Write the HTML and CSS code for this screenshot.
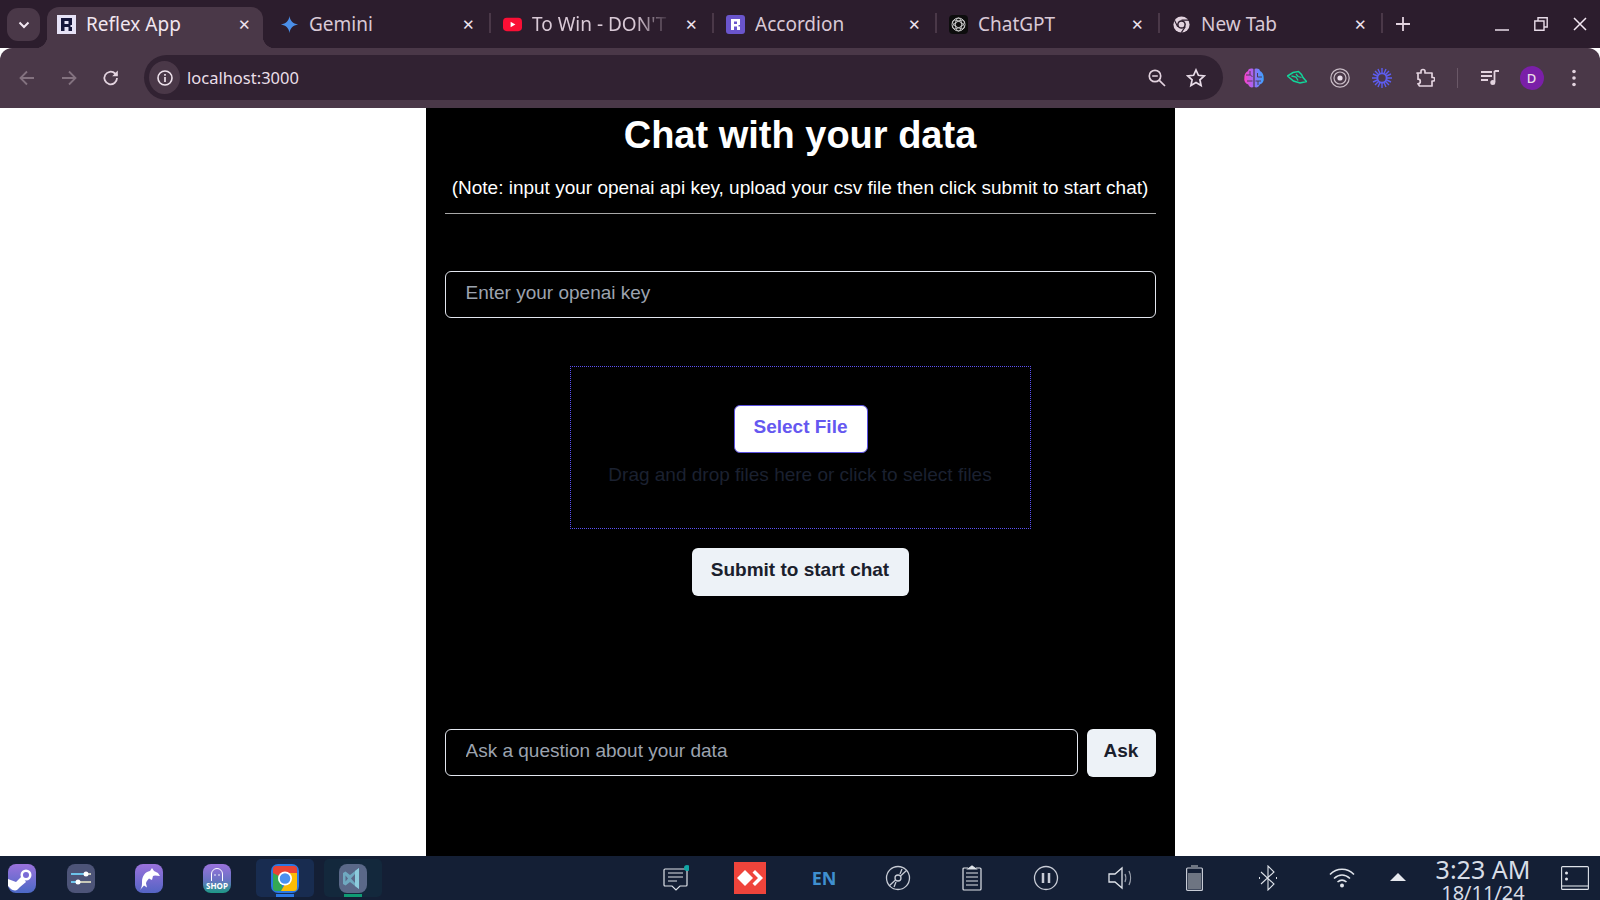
FILE: index.html
```html
<!DOCTYPE html>
<html lang="en">
<head>
<meta charset="utf-8">
<title>Reflex App</title>
<link rel="stylesheet" href="styles.css">
</head>
<body>
<div class="window">
  <header class="tabstrip">
    <button class="tab-search"><svg width="12" height="8" viewBox="0 0 12 8"><path d="M1.500 1.500 6 6l4.500-4.500" fill="none" stroke="#f3e8f3" stroke-width="2"/></svg></button>
    <div class="tab active">
      <svg class="fav" viewBox="0 0 19 19"><rect width="19" height="19" fill="#e6e2f6"/><path fill-rule="evenodd" d="M4 3h11v7h-1.500v2H15v4h-3.500v-4h-4v4H4zm3.500 3v3h4V6z" fill="#15163a"/></svg>
      <span class="tab-title">Reflex App</span><span class="tab-x">✕</span>
    </div>
    <div class="tab">
      <svg class="fav" viewBox="0 0 20 20"><path d="M10 1c.7 5 3.500 8 9 9-5.500 1-8.300 4-9 9-.7-5-3.500-8-9-9 5.500-1 8.300-4 9-9z" fill="#4b8fe8"/></svg>
      <span class="tab-title">Gemini</span><span class="tab-x">✕</span>
    </div>
    <div class="tab sep">
      <svg class="fav" viewBox="0 0 20 20"><rect y="3" width="20" height="14" rx="4" fill="#fa0f35"/><path d="M8 7.200 13 10l-5 2.800z" fill="#fff"/></svg>
      <span class="tab-title fade">To Win - DON'T Look Back</span><span class="tab-x">✕</span>
    </div>
    <div class="tab sep">
      <svg class="fav" viewBox="0 0 19 19"><rect width="19" height="19" rx="3" fill="#6a55cc"/><path fill-rule="evenodd" d="M5 4h9v6h-1.500v1.500H14V15h-3v-3.500H8V15H5zm3 2.500V9h3V6.500z" fill="#fff"/></svg>
      <span class="tab-title">Accordion</span><span class="tab-x">✕</span>
    </div>
    <div class="tab sep">
      <svg class="fav" viewBox="0 0 19 19"><rect width="19" height="19" rx="4" fill="#0d0d0d"/><g fill="none" stroke="#c9c9c9" stroke-width="1"><circle cx="9.500" cy="9.500" r="6.500"/><ellipse cx="9.500" cy="9.500" rx="6.500" ry="3" transform="rotate(30 9.500 9.500)"/><ellipse cx="9.500" cy="9.500" rx="6.500" ry="3" transform="rotate(-30 9.500 9.500)"/><ellipse cx="9.500" cy="9.500" rx="3" ry="6.500"/></g></svg>
      <span class="tab-title">ChatGPT</span><span class="tab-x">✕</span>
    </div>
    <div class="tab sep">
      <svg class="fav" viewBox="0 0 20 20"><circle cx="10" cy="10" r="8.500" fill="#e3d3df"/><circle cx="10" cy="10" r="4.600" fill="#2c1d2d"/><circle cx="10" cy="10" r="3" fill="#e3d3df"/><path d="M10 5.400h8M6 12.300 2.600 5.500M14 12.300l-4.200 6.300" stroke="#2c1d2d" stroke-width="1.200"/></svg>
      <span class="tab-title">New Tab</span><span class="tab-x">✕</span>
    </div>
    <span class="tab-divider"></span>
    <svg class="new-tab" width="14" height="14" viewBox="0 0 14 14"><path d="M7 0v14M0 7h14" stroke="#e3d3df" stroke-width="1.800"/></svg>
    <div class="win-controls">
      <svg width="14" height="14" viewBox="0 0 14 14"><path d="M0 13h14" stroke="#e8dce8" stroke-width="1.500"/></svg>
      <svg width="14" height="14" viewBox="0 0 14 14"><path d="M4 3.500V.8h9.200V10H10.500M.8 4h9.200v9.200H.8z" fill="none" stroke="#e8dce8" stroke-width="1.400"/></svg>
      <svg width="14" height="14" viewBox="0 0 14 14"><path d="m1 1 12 12M13 1 1 13" stroke="#f3e8f3" stroke-width="1.500"/></svg>
    </div>
  </header>

  <nav class="toolbar">
    <div class="nav-group">
      <svg class="tb" viewBox="0 0 20 20"><path d="M17 10H4m6-6.500L3.500 10l6.500 6.500" fill="none" stroke="#83727f" stroke-width="1.800"/></svg>
      <svg class="tb" viewBox="0 0 20 20"><path d="M3 10h13M10 3.500l6.500 6.500-6.500 6.500" fill="none" stroke="#83727f" stroke-width="1.800"/></svg>
      <svg class="tb" viewBox="0 0 20 20"><path d="M16 10a6.300 6.300 0 1 1-1.900-4.500L16 7.300" fill="none" stroke="#e3d3df" stroke-width="1.800"/><path d="M16.800 2.600v5.600h-5.600z" fill="#e3d3df"/></svg>
    </div>
    <div class="omnibox">
      <span class="site-info"><svg width="18" height="18" viewBox="0 0 18 18"><circle cx="9" cy="9" r="7" fill="none" stroke="#eee2ec" stroke-width="1.600"/><path d="M9 8v5M9 5v1.700" stroke="#eee2ec" stroke-width="1.700"/></svg></span>
      <span class="url">localhost:3000</span>
      <svg class="omni-icon" viewBox="0 0 20 20"><circle cx="8" cy="8" r="5.700" fill="none" stroke="#e3d3df" stroke-width="1.700"/><path d="M5.200 8h5.600M12.300 12.300l5.700 5.700" stroke="#e3d3df" stroke-width="1.700"/></svg>
      <svg class="omni-icon" viewBox="0 0 20 20"><path d="m10 2 2.400 5.300 5.800.6-4.300 3.900 1.200 5.700L10 14.600l-5.100 2.900 1.200-5.700L1.800 7.900l5.800-.6z" fill="none" stroke="#e8dce8" stroke-width="1.700"/></svg>
    </div>
    <div class="ext-group">
      <svg class="tb" viewBox="0 0 20 20"><defs><linearGradient id="brain"><stop offset="0" stop-color="#ff3fc8"/><stop offset=".5" stop-color="#9a6bf8"/><stop offset="1" stop-color="#38a4ff"/></linearGradient></defs><path d="M9.400 1C7 0 4.500 .5 4 3 1.500 4 0 7.500.4 10c-.7 3 1 6 3.800 6.500 1 3 3.800 3.500 5.200 2.500zM10.600 1C13 0 15.500 .5 16 3c2.500 1 4 4.500 3.600 7 .7 3-1 6-3.800 6.500-1 3-3.800 3.500-5.200 2.500z" fill="url(#brain)"/><path d="M2 7h4.500l2 2M3 13h5.500M13.500 5v4h4.500M11.500 13h5.500M6 3v4M14 13v4" fill="none" stroke="#4a3848" stroke-width=".9"/></svg>
      <svg class="tb" viewBox="0 0 20 20"><path d="M.5 8 6 4.500l5.500-1 3 3L16 9.500l3.500 4-6.500 1.500-6.500-2z" fill="none" stroke="#11d69a" stroke-width="1.500"/><path d="M4.500 8l4.500 1 2 3.500M9 6l2 2.500 3.500 1" fill="none" stroke="#11d69a" stroke-width="1.300"/></svg>
      <svg class="tb" viewBox="0 0 20 20" fill="none" stroke="#c9bcc6"><circle cx="10" cy="10" r="9.200" stroke-width="1.200"/><circle cx="10" cy="10" r="6" stroke-width="1.200"/><circle cx="10" cy="10" r="2.600" fill="#e8dce8" stroke="none"/></svg>
      <svg class="tb" viewBox="0 0 20 20"><g stroke="#5d5df0" stroke-width="1.400"><path d="M10 0v5.500M10 14.500V20M0 10h5.500M14.500 10H20M3 3l4 4M13 13l4 4M17 3l-4 4M7 13l-4 4M6 1l2 4.500M12 14.500l2 4.500M14 1l-2 4.500M8 14.500 6 19M1 6l4.500 2M14.500 12l4.500 2M19 6l-4.500 2M5.500 12 1 14"/></g><circle cx="10" cy="10" r="4.600" fill="none" stroke="#5d5df0" stroke-width="1.800"/></svg>
      <svg class="tb" viewBox="0 0 20 20"><path d="M2 5h4V3.500a2 2 0 0 1 4 0V5h7v4.500h1a1.700 1.700 0 0 1 0 3.500h-1v5H4.500L3 15.800a2 2 0 0 0 0-4.600V5z" fill="none" stroke="#e3d3df" stroke-width="1.700" stroke-linejoin="round"/></svg>
      <span class="tb-sep"></span>
      <svg class="tb" viewBox="0 0 20 20"><path d="M1 4h11M1 8h11M1 12h7" stroke="#e3d3df" stroke-width="1.800"/><path d="M14.500 3v11" stroke="#e3d3df" stroke-width="1.800"/><path d="M14.500 3H19" stroke="#e3d3df" stroke-width="2"/><circle cx="12.800" cy="14.500" r="2.500" fill="#e3d3df"/></svg>
      <span class="avatar">D</span>
      <svg class="tb" viewBox="0 0 20 20"><g fill="#e3d3df"><circle cx="10" cy="3.500" r="1.800"/><circle cx="10" cy="10" r="1.800"/><circle cx="10" cy="16.500" r="1.800"/></g></svg>
    </div>
  </nav>

  <main class="page">
    <section class="panel">
      <h1 class="title">Chat with your data</h1>
      <p class="note">(Note: input your openai api key, upload your csv file then click submit to start chat)</p>
      <hr class="divider">
      <input class="field key-field" type="text" placeholder="Enter your openai key">
      <div class="dropzone">
        <button class="select-btn">Select File</button>
        <p class="drop-text">Drag and drop files here or click to select files</p>
      </div>
      <button class="grey-btn submit-btn">Submit to start chat</button>
      <div class="ask-row">
        <input class="field ask-field" type="text" placeholder="Ask a question about your data">
        <button class="grey-btn ask-btn">Ask</button>
      </div>
    </section>
  </main>

  <footer class="taskbar">
    <div class="apps">
      <span class="app"><svg class="app-icon" viewBox="0 0 28 29"><defs><linearGradient id="g1" x1="0" y1="0" x2="0" y2="1"><stop offset="0" stop-color="#9a72dc"/><stop offset="1" stop-color="#4b69c6"/></linearGradient></defs><rect width="28" height="29" rx="8" fill="url(#g1)"/><circle cx="18" cy="11" r="5.500" fill="#fff"/><circle cx="18" cy="11" r="3" fill="#7a6bd6"/><path d="M0 15l8 3 6-6 4 6-6 5-3 3c-2 1-5 0-6-1l-3-3z" fill="#fff"/></svg></span>
      <span class="app tight"><svg class="app-icon" viewBox="0 0 28 29"><rect width="28" height="29" rx="8" fill="#4d5478"/><path d="M4 10h15" stroke="#6cc3ea" stroke-width="2"/><path d="M19 10h5M11 18h13" stroke="#c8c8b8" stroke-width="2"/><path d="M4 18h7" stroke="#6cc3ea" stroke-width="2"/><circle cx="19" cy="10" r="2.500" fill="#fff"/><circle cx="11" cy="18" r="2.500" fill="#fff"/></svg></span>
      <span class="app"><svg class="app-icon" viewBox="0 0 28 29"><defs><linearGradient id="g2" x1="0" y1="0" x2="0" y2="1"><stop offset="0" stop-color="#9a72dc"/><stop offset="1" stop-color="#5464c4"/></linearGradient></defs><rect width="28" height="29" rx="8" fill="url(#g2)"/><path d="M5 26c2-3 2-5 2-8 0-6 3-10 8-11l2-3 2 3 4 2 2 3-5-.5-2 .5-1 4-3-1.500c-1 1-3 3-3 5l1 4-3-2z" fill="#fff"/></svg></span>
      <span class="app"><svg class="app-icon" viewBox="0 0 28 29"><defs><linearGradient id="g3" x1="0" y1="0" x2="0" y2="1"><stop offset="0" stop-color="#9a72dc"/><stop offset=".55" stop-color="#6a72c4"/><stop offset="1" stop-color="#1d9a86"/></linearGradient></defs><rect width="28" height="29" rx="8" fill="url(#g3)"/><path d="M8.500 17V10a5.500 5.500 0 0 1 11 0v7" fill="none" stroke="#fff" stroke-width="1"/><circle cx="12" cy="11" r=".8" fill="#fff"/><circle cx="16" cy="11" r=".8" fill="#fff"/><text x="14" y="25" class="shop">SHOP</text></svg></span>
      <span class="app running chrome-app"><svg class="app-icon chrome" viewBox="0 0 28 29"><rect width="28" height="29" rx="7" fill="#2b78e4"/><path d="M2 8h10L8 14l5 13H5a3 3 0 0 1-3-3z" fill="#34a853"/><path d="M14 8h12v16a3 3 0 0 1-3 3H10l4-7z" fill="#fbbc04"/><path d="M2 9V5a3 3 0 0 1 3-3h18a3 3 0 0 1 3 3v4H14a6.500 6.500 0 0 0-6 3z" fill="#ea4335"/><circle cx="14" cy="14.500" r="7" fill="#fff"/><circle cx="14" cy="14.500" r="5.300" fill="#4a90f0"/></svg><i class="run-bar blue"></i></span>
      <span class="app running vs-app"><svg class="app-icon" viewBox="0 0 28 29"><rect width="28" height="29" rx="8" fill="#5a6888"/><path d="M20 4v21l-9-7-4.500 3.500L4 20v-11l2.500-1.500L11 11z" fill="#6fa9c0"/><path d="M16 7v15l4 3V4z" fill="#8ccbdc"/><path d="M16 10v9l-4-4.500z" fill="#5a6888"/><path d="M6.500 11.500v6l2.500-3z" fill="#5a6888"/></svg><i class="run-bar green"></i></span>
    </div>
    <div class="tray">
      <span class="tray-item"><svg width="26" height="27" viewBox="0 0 26 27"><path d="M2 4h21a1 1 0 0 1 1 1v15a1 1 0 0 1-1 1h-6l-4 4-4-4H2a1 1 0 0 1-1-1V5a1 1 0 0 1 1-1z" fill="none" stroke="#dfe3ea" stroke-width="1.200"/><path d="M5 8h15M5 12h15M5 16h9" stroke="#dfe3ea" stroke-width="1.200"/><circle cx="24" cy="3" r="3" fill="#12a5a5"/></svg></span>
      <span class="tray-item"><svg width="32" height="32" viewBox="0 0 32 32"><rect width="32" height="32" fill="#ef443b"/><path d="m11 8 8 8-8 8-8-8zM21 8l8 8-8 8-2.500-2.500L24 16l-5.500-5.500z" fill="#fff"/></svg></span>
      <span class="tray-item en">EN</span>
      <span class="tray-item"><svg width="26" height="26" viewBox="0 0 26 26" fill="none" stroke="#c8ccd6" stroke-width="1.300"><circle cx="13" cy="13" r="11.500"/><circle cx="13" cy="13" r="3"/><path d="M15.500 11 22 5M4 21l6.500-6M17 4l-2 5M11 17l-2 5"/></svg></span>
      <span class="tray-item"><svg width="20" height="26" viewBox="0 0 20 26" fill="none" stroke="#dfe3ea" stroke-width="1.200"><path d="M6 3H2a1 1 0 0 0-1 1v20a1 1 0 0 0 1 1h16a1 1 0 0 0 1-1V4a1 1 0 0 0-1-1h-4"/><path d="M6 4l4-3 4 3z" fill="#dfe3ea"/><path d="M4 8h12M4 12h12M4 16h12M4 20h12"/></svg></span>
      <span class="tray-item"><svg width="26" height="26" viewBox="0 0 26 26"><circle cx="13" cy="13" r="11.500" fill="none" stroke="#c8ccd6" stroke-width="1.300"/><path d="M10 8v10M16 8v10" stroke="#c8ccd6" stroke-width="2.500"/></svg></span>
      <span class="tray-item speaker"><svg width="28" height="26" viewBox="0 0 28 26" fill="none" stroke="#dfe3ea" stroke-width="1.300"><path d="M1 9h6l7-6v20l-7-6H1z"/><path d="M17 9c1 2 1 6 0 8M21 6c2 4 2 10 0 14" stroke="#9aa0ac"/></svg></span>
      <span class="tray-item"><svg width="17" height="26" viewBox="0 0 17 26"><rect x=".6" y="3" width="15.800" height="22.400" rx="1" fill="none" stroke="#c8ccd6" stroke-width="1.200"/><rect x="2" y="8" width="13" height="16" fill="#6e7582"/><rect x="5" y="0" width="7" height="3" fill="#6e7582"/></svg></span>
      <span class="tray-item"><svg width="20" height="26" viewBox="0 0 20 26" fill="none" stroke="#dfe3ea" stroke-width="1.100"><path d="M3 7l13 12-6 6V1l6 6L3 19"/><path d="M1 13h1M18 13h1" stroke-width="2"/></svg></span>
      <span class="tray-item"><svg width="26" height="20" viewBox="0 0 26 20" fill="none" stroke="#dfe3ea" stroke-width="1.600"><path d="M1 6.500c7-7 17-7 24 0M5 10.500c5-4.500 11-4.500 16 0M8.500 14c3-2.500 6-2.500 9 0"/><circle cx="13" cy="17.500" r="2" fill="#dfe3ea" stroke="none"/></svg></span>
    </div>
    <svg class="tray-up" width="16" height="8" viewBox="0 0 16 8"><path d="M8 0l8 8H0z" fill="#e6e8ee"/></svg>
    <div class="clock"><span class="time">3:23 AM</span><span class="date">18/11/24</span></div>
    <svg class="show-desk" width="28" height="24" viewBox="0 0 28 24" fill="none" stroke="#dfe3ea" stroke-width="1.100"><rect x=".6" y=".6" width="26.800" height="22.800" rx="1"/><path d="M1 20h26"/><circle cx="5.500" cy="7" r="1.500" fill="#dfe3ea" stroke="none"/><circle cx="5.500" cy="13" r="1.500" fill="#dfe3ea" stroke="none"/></svg>
  </footer>
</div>
</body>
</html>
```
FILE: styles.css
```css
* { box-sizing: border-box; }
html, body { margin: 0; height: 100%; overflow: hidden; }
body { background: #fff; font-family: "Liberation Sans", Arial, sans-serif; }
button { font-family: inherit; cursor: pointer; }

.window { display: flex; flex-direction: column; height: 900px; }

/* Tab strip */
.tabstrip {
  height: 48px; flex: none; display: flex; align-items: flex-start;
  background: #2c1d2d; padding: 7px 0 0 7px;
  font-family: "Noto Sans", sans-serif;
}
.tab-search {
  width: 33px; height: 33px; margin: 1px 7px 0 0; flex: none; border: 0; border-radius: 11px;
  background: #4a3848; display: flex; align-items: center; justify-content: center; padding: 0;
}
.tab {
  position: relative; width: 223px; height: 41px; flex: none; display: flex; align-items: center;
  padding: 0 17px 7px 10px; color: #d9c9d6; font-size: 19px;
}
.tab.active { width: 216px; margin-right: 7px; padding-right: 11px; background: #4a3848; color: #f1e6ef; border-radius: 12px 12px 0 0; }
.tab.active::before, .tab.active::after {
  content: ""; position: absolute; bottom: 0; width: 12px; height: 12px;
}
.tab.active::before { left: -12px; background: radial-gradient(circle at 0 0, transparent 12px, #4a3848 12.500px); }
.tab.active::after { right: -12px; background: radial-gradient(circle at 100% 0, transparent 12px, #4a3848 12.500px); }
.tab.sep::before, .tab-divider {
  content: ""; width: 2px; height: 20px; background: #4a3848;
}
.tab.sep::before { position: absolute; left: -4px; top: 6px; }
.tab-divider { flex: none; margin: 6px 0 0 -4px; }
.fav { width: 19px; height: 19px; flex: none; margin-right: 10px; }
.tab-title { flex: 1; min-width: 0; white-space: nowrap; overflow: hidden; }
.tab-title.fade {
  -webkit-mask-image: linear-gradient(90deg, #000 75%, transparent 100%);
  mask-image: linear-gradient(90deg, #000 75%, transparent 100%);
}
.tab-x { width: 16px; font-size: 15px; text-align: center; flex: none; margin-left: 12px; color: #efe3ed; }
.new-tab { margin: 10px 0 0 13px; flex: none; }
.win-controls { margin-left: auto; display: flex; gap: 25px; padding: 10px 13px 0 0; }

/* Toolbar */
.toolbar {
  height: 60px; flex: none; display: flex; align-items: center; background: #4a3848;
  border-radius: 12px 12px 0 0; padding: 0 12px 1px 17px; font-family: "Noto Sans", sans-serif;
}
.nav-group { display: flex; gap: 22px; align-items: center; margin-right: 23px; }
.tb { width: 20px; height: 20px; flex: none; }
.omnibox {
  width: 1079px; height: 45px; flex: none; display: flex; align-items: center; border-radius: 23px;
  background: #312232; padding: 0 17px 0 6px; color: #eadfe8; font-size: 16.500px;
}
.site-info {
  width: 31px; height: 33px; border-radius: 50%; background: #4a3848; display: flex;
  align-items: center; justify-content: center; margin-right: 7px; margin-left: -1px;
}
.url { flex: 1; }
.omni-icon { width: 20px; height: 20px; margin-left: 19px; flex: none; }
.ext-group { display: flex; align-items: center; gap: 22.800px; margin-left: 21px; }
.tb-sep { width: 1px; height: 20px; background: #6a5867; margin: 0 -1px 0 -1px; }
.avatar {
  width: 24px; height: 24px; border-radius: 50%; background: #7a1fa8; color: #eadfe8; font-size: 13px;
  font-weight: 500; display: flex; align-items: center; justify-content: center; flex: none; margin: 0 -2px 0 -3px;
}

/* Page */
.page { flex: 1; min-height: 0; display: flex; justify-content: center; background: #fff; }
.panel {
  width: 749px; background: #000; color: #fff; padding: 7px 19px 0;
  display: flex; flex-direction: column; align-items: center; overflow: hidden;
}
.title { margin: 0; font-size: 38px; line-height: 40px; font-weight: 700; height: 40px; flex: none; }
.note { margin: 19px 0 0; font-size: 19px; line-height: 28px; white-space: nowrap; }
.divider { width: 100%; height: 1px; margin: 11px 0 0; border: 0; background: #a8a8a8; flex: none; }
.field {
  height: 47px; border: 1px solid #e2e6ee; border-radius: 6px; background: transparent; color: #fff;
  font: 19px "Liberation Sans", Arial, sans-serif; padding: 0 19px 4px 20px; outline: none;
}
.field::placeholder { color: #9ca3af; opacity: 1; }
.key-field { width: 100%; margin-top: 57px; flex: none; }
.dropzone {
  width: 461px; height: 163px; margin-top: 48px; flex: none; border: 1px dotted #5a50f0;
  display: flex; flex-direction: column; align-items: center; padding-top: 38px;
}
.select-btn {
  width: 134px; height: 48px; margin-left: 1px; background: #fff; color: #6558f0; border: 1px solid #5a50e0; border-radius: 6px;
  font-size: 19px; font-weight: 700; padding: 0 0 5px; flex: none;
}
.drop-text { margin: 8px 0 0; font-size: 19px; line-height: 28px; color: #1b2130; white-space: nowrap; }
.grey-btn {
  background: #edf2f7; color: #1a202c; border: 0; border-radius: 6px; font-size: 19px; font-weight: 700;
  height: 48px; padding: 0 0 5px;
}
.submit-btn { width: 217px; margin-top: 19px; flex: none; }
.ask-row { width: 100%; display: flex; gap: 9px; margin-top: 133px; flex: none; }
.ask-field { flex: 1; min-width: 0; }
.ask-btn { width: 69px; flex: none; }

/* Taskbar */
.taskbar {
  height: 44px; flex: none; display: flex; align-items: center; background: #141f35; position: relative;
  font-family: "Noto Sans", sans-serif; color: #d8dde6; overflow: hidden;
}
.apps { display: flex; align-items: center; width: 639px; padding-left: 8px; gap: 40px; flex: none; }
.app { position: relative; display: flex; justify-content: center; align-items: center; flex: none; width: 28px; height: 29px; }
.app.tight { margin-left: -9px; }
.app.running { width: 58px; height: 38px; border-radius: 5px; margin: 0 -15px; }
.chrome-app { background: #182c50; }
.vs-app { background: #13283c; }
.app-icon { width: 28px; height: 29px; display: block; }
.shop { font: 700 8px "Noto Sans", sans-serif; fill: #fff; text-anchor: middle; }
.run-bar { position: absolute; bottom: 0; left: 20px; width: 18px; height: 3px; }
.run-bar.blue { background: #2b78e4; }
.run-bar.green { background: #0f9b74; }
.tray { display: flex; align-items: center; flex: none; }
.tray-item { width: 74px; display: flex; align-items: center; justify-content: center; flex: none; }
.speaker { padding-left: 3px; }
.en { font-size: 18px; font-weight: 700; color: #3f8fcf; }
.tray-up { margin: 0 0 3px 11px; flex: none; }
.clock { width: 100px; margin-left: 27px; display: flex; flex-direction: column; align-items: center; height: 44px; flex: none; }
.time { font-size: 25px; line-height: 26px; white-space: nowrap; }
.date { font-size: 20px; line-height: 20px; margin-top: 1px; white-space: nowrap; }
.show-desk { margin-left: 28px; flex: none; }
```
